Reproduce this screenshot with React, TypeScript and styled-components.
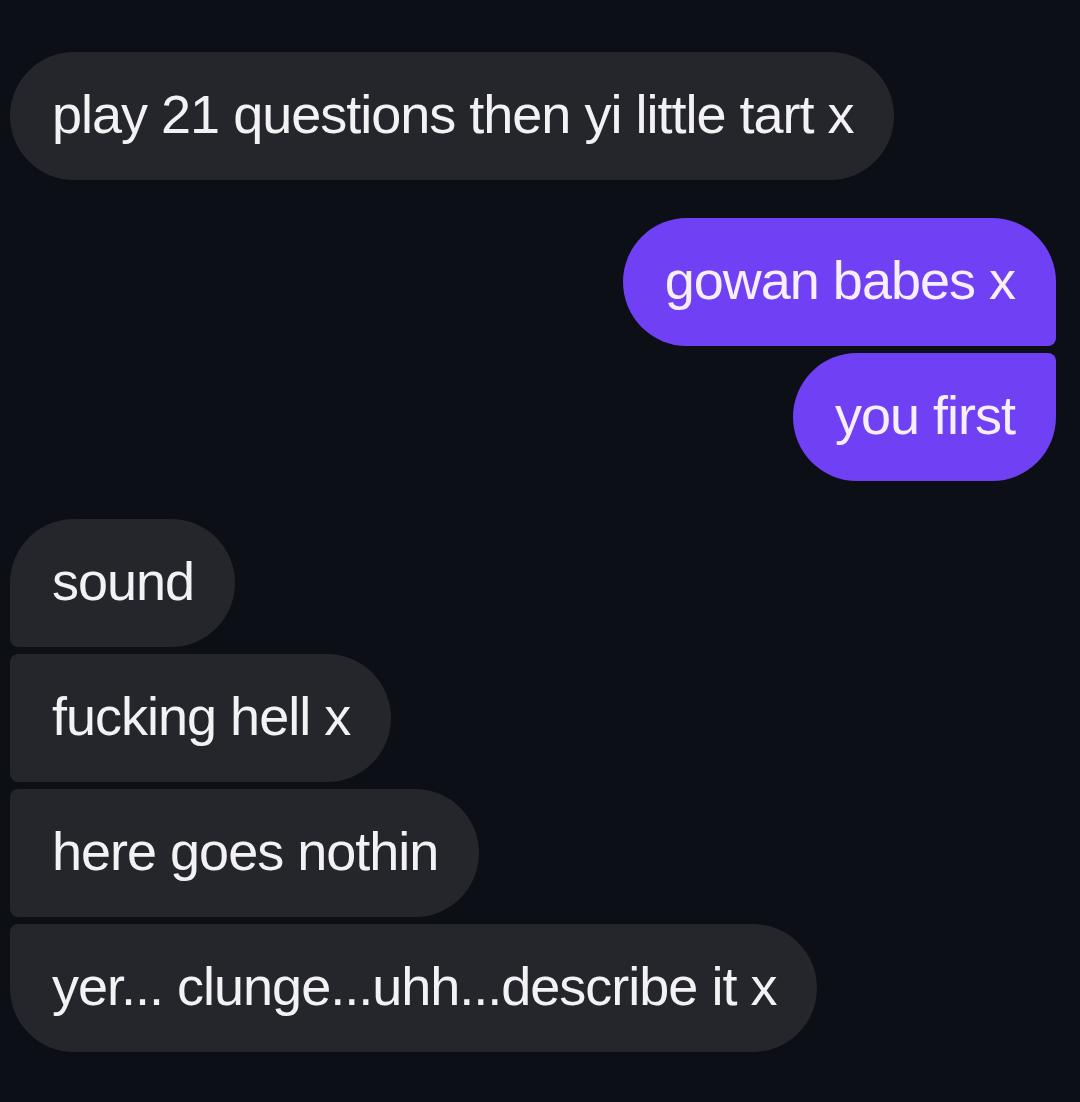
import React from "react";
import styled, { createGlobalStyle, css } from "styled-components";

const Global = createGlobalStyle`
  html, body { margin: 0; padding: 0; background: #0c0f15; }
  body { font-family: "Liberation Sans", Arial, sans-serif; }
`;

const Thread = styled.div`
  width: 1080px;
  height: 1102px;
  box-sizing: border-box;
  padding: 52px 24px 0 10px;
  background: #0c0f15;
  display: flex;
  flex-direction: column;
  gap: 38px;
  overflow: hidden;
`;

const Group = styled.div<{ $mine?: boolean }>`
  display: flex;
  flex-direction: column;
  gap: 7px;
  align-items: ${(p) => (p.$mine ? "flex-end" : "flex-start")};
`;

type Pos = "single" | "first" | "middle" | "last";

const Bubble = styled.div<{ $mine?: boolean; $pos: Pos }>`
  box-sizing: border-box;
  height: 128px;
  padding: 0 41px 4px 42px;
  display: flex;
  align-items: center;
  font-size: 54px;
  letter-spacing: -1px;
  white-space: nowrap;
  color: ${(p) => (p.$mine ? "#f7eefb" : "#f2f2f4")};
  background: ${(p) => (p.$mine ? "#7040f5" : "#24262b")};
  border-radius: 64px;
  ${(p) =>
    p.$mine
      ? css`
          ${p.$pos === "first" && "border-bottom-right-radius: 8px;"}
          ${p.$pos === "middle" && "border-top-right-radius: 8px; border-bottom-right-radius: 8px;"}
          ${p.$pos === "last" && "border-top-right-radius: 8px;"}
        `
      : css`
          ${p.$pos === "first" && "border-bottom-left-radius: 8px;"}
          ${p.$pos === "middle" && "border-top-left-radius: 8px; border-bottom-left-radius: 8px;"}
          ${p.$pos === "last" && "border-top-left-radius: 8px;"}
        `}
`;

export default function App() {
  return (
    <>
      <Global />
      <Thread>
        <Group>
          <Bubble $pos="single">play 21 questions then yi little tart x</Bubble>
        </Group>
        <Group $mine>
          <Bubble $mine $pos="first">gowan babes x</Bubble>
          <Bubble $mine $pos="last">you first</Bubble>
        </Group>
        <Group>
          <Bubble $pos="first">sound</Bubble>
          <Bubble $pos="middle">fucking hell x</Bubble>
          <Bubble $pos="middle">here goes nothin</Bubble>
          <Bubble $pos="last">yer... clunge...uhh...describe it x</Bubble>
        </Group>
      </Thread>
    </>
  );
}
